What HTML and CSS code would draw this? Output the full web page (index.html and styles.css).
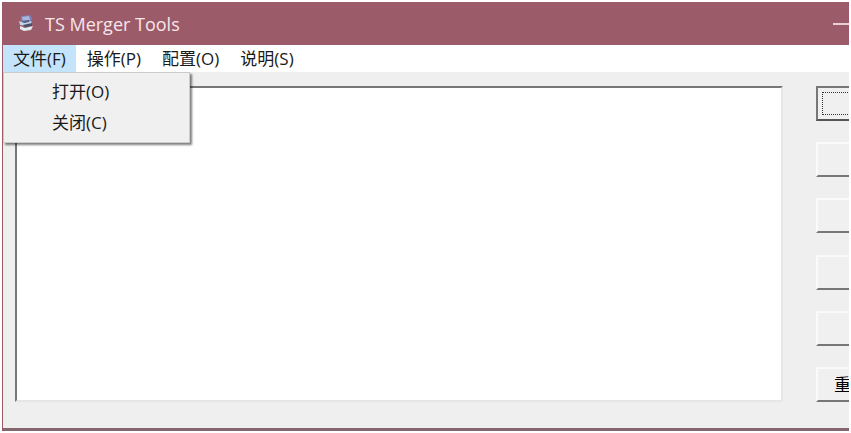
FILE: index.html
```html
<!DOCTYPE html>
<html lang="zh-CN">
<head>
    <meta charset="UTF-8">
    <meta name="viewport" content="width=device-width, initial-scale=1.0">
    <title>TS Merger Tools</title>
    <link rel="stylesheet" href="styles.css">
</head>
<body>
    <div class="window">
        <header class="titlebar">
            <svg class="app-icon" width="18" height="20" viewBox="0 0 18 20" aria-hidden="true">
                <path d="M4 2 L13 1 L15 4 L14 10 L4 10 Z" fill="#7d80b4"/>
                <path d="M5 3 L12 2 L13 6 L6 7 Z" fill="#a9b6dc"/>
                <path d="M2 7 L8 9 L14 7 L15 10 L9 12 L3 11 Z" fill="#c3d2e6"/>
                <path d="M6 11 L15 9 L15 12 L8 13 Z" fill="#46506a"/>
                <path d="M3 12 L8 14 L16 12 L14 16 L7 17 L3 15 Z" fill="#e2edf2"/>
                <path d="M4 7 L12 6 L12 8 L7 9 Z" fill="#56638f"/>
            </svg>
            <h1 class="title">TS Merger Tools</h1>
            <button class="minimize" aria-label="最小化"></button>
        </header>
        <nav class="menubar">
            <div class="menu">
                <button class="menu-button active">文件(F)</button>
                <div class="dropdown">
                    <button class="dropdown-item">打开(O)</button>
                    <button class="dropdown-item">关闭(C)</button>
                </div>
            </div>
            <button class="menu-button">操作(P)</button>
            <button class="menu-button">配置(O)</button>
            <button class="menu-button">说明(S)</button>
        </nav>
        <main class="content">
            <textarea class="file-list" aria-label="文件列表"></textarea>
            <div class="actions">
                <button class="action focused"></button>
                <button class="action"></button>
                <button class="action"></button>
                <button class="action"></button>
                <button class="action"></button>
                <button class="action">重</button>
            </div>
        </main>
    </div>
</body>
</html>
```

FILE: styles.css
```css
* {
    box-sizing: border-box;
}
body {
    margin: 0;
    padding: 2px;
    height: 100vh;
    background-color: #ffffff;
    font-family: "Open Sans", "Noto Sans CJK SC", sans-serif;
}
button {
    margin: 0;
    border: none;
    border-radius: 0;
    font-family: inherit;
    color: #1a1a1a;
}
.window {
    display: flex;
    flex-direction: column;
    height: 100%;
    overflow: hidden;
    background-color: #efefef;
    border-left: 1px solid #9a5a68;
    border-bottom: 3px solid #85656e;
}
.titlebar {
    display: flex;
    align-items: center;
    height: 43px;
    padding-left: 14px;
    background-color: #9c5b69;
}
.app-icon {
    flex: none;
}
.title {
    flex: 1;
    margin: 0 0 0 10px;
    font-size: 18px;
    font-weight: normal;
    color: #f7e6ea;
}
.minimize {
    width: 16px;
    height: 2px;
    padding: 0;
    background-color: #e8ced5;
}
.menubar {
    display: flex;
    gap: 1px;
    height: 27px;
    background-color: #ffffff;
}
.menu {
    position: relative;
}
.menu-button {
    height: 27px;
    padding: 0 10px;
    font-size: 17px;
    line-height: 27px;
    background-color: transparent;
}
.menu-button.active {
    background-color: #c4e4fb;
}
.dropdown {
    position: absolute;
    top: 100%;
    left: 0;
    z-index: 1;
    width: 187px;
    padding: 3px 0 4px;
    background-color: #f0f0f0;
    border: 1px solid #cccccc;
    box-shadow: 2px 2px 2px rgba(0, 0, 0, 0.5);
}
.dropdown-item {
    display: block;
    width: 100%;
    height: 31px;
    padding: 0 0 0 48px;
    font-size: 17px;
    line-height: 31px;
    text-align: left;
    background-color: transparent;
}
.menu-button:hover,
.dropdown-item:hover {
    background-color: #c4e4fb;
}
.content {
    display: flex;
    flex: 1;
    gap: 33px;
    min-height: 0;
    padding: 14px 0 26px 12px;
}
.file-list {
    flex: 1;
    min-width: 0;
    margin: 0;
    padding: 4px;
    border: 2px solid;
    border-color: #777777 #e6e6e6 #e6e6e6 #777777;
    border-radius: 0;
    background-color: #ffffff;
    resize: none;
    outline: none;
    font-family: inherit;
    font-size: 17px;
}
.actions {
    display: flex;
    flex-direction: column;
    justify-content: space-between;
    width: 33px;
    overflow: hidden;
}
.action {
    width: 120px;
    height: 35px;
    padding: 0 0 0 16px;
    border: 2px solid;
    border-color: #fafafa #777777 #777777 #fafafa;
    background-color: #f0f0f0;
    font-size: 17px;
    line-height: 31px;
    text-align: left;
    color: #000000;
}
.action.focused {
    border-color: #777777 #555555 #555555 #777777;
    outline: 1px dotted #333333;
    outline-offset: -7px;
}
```
